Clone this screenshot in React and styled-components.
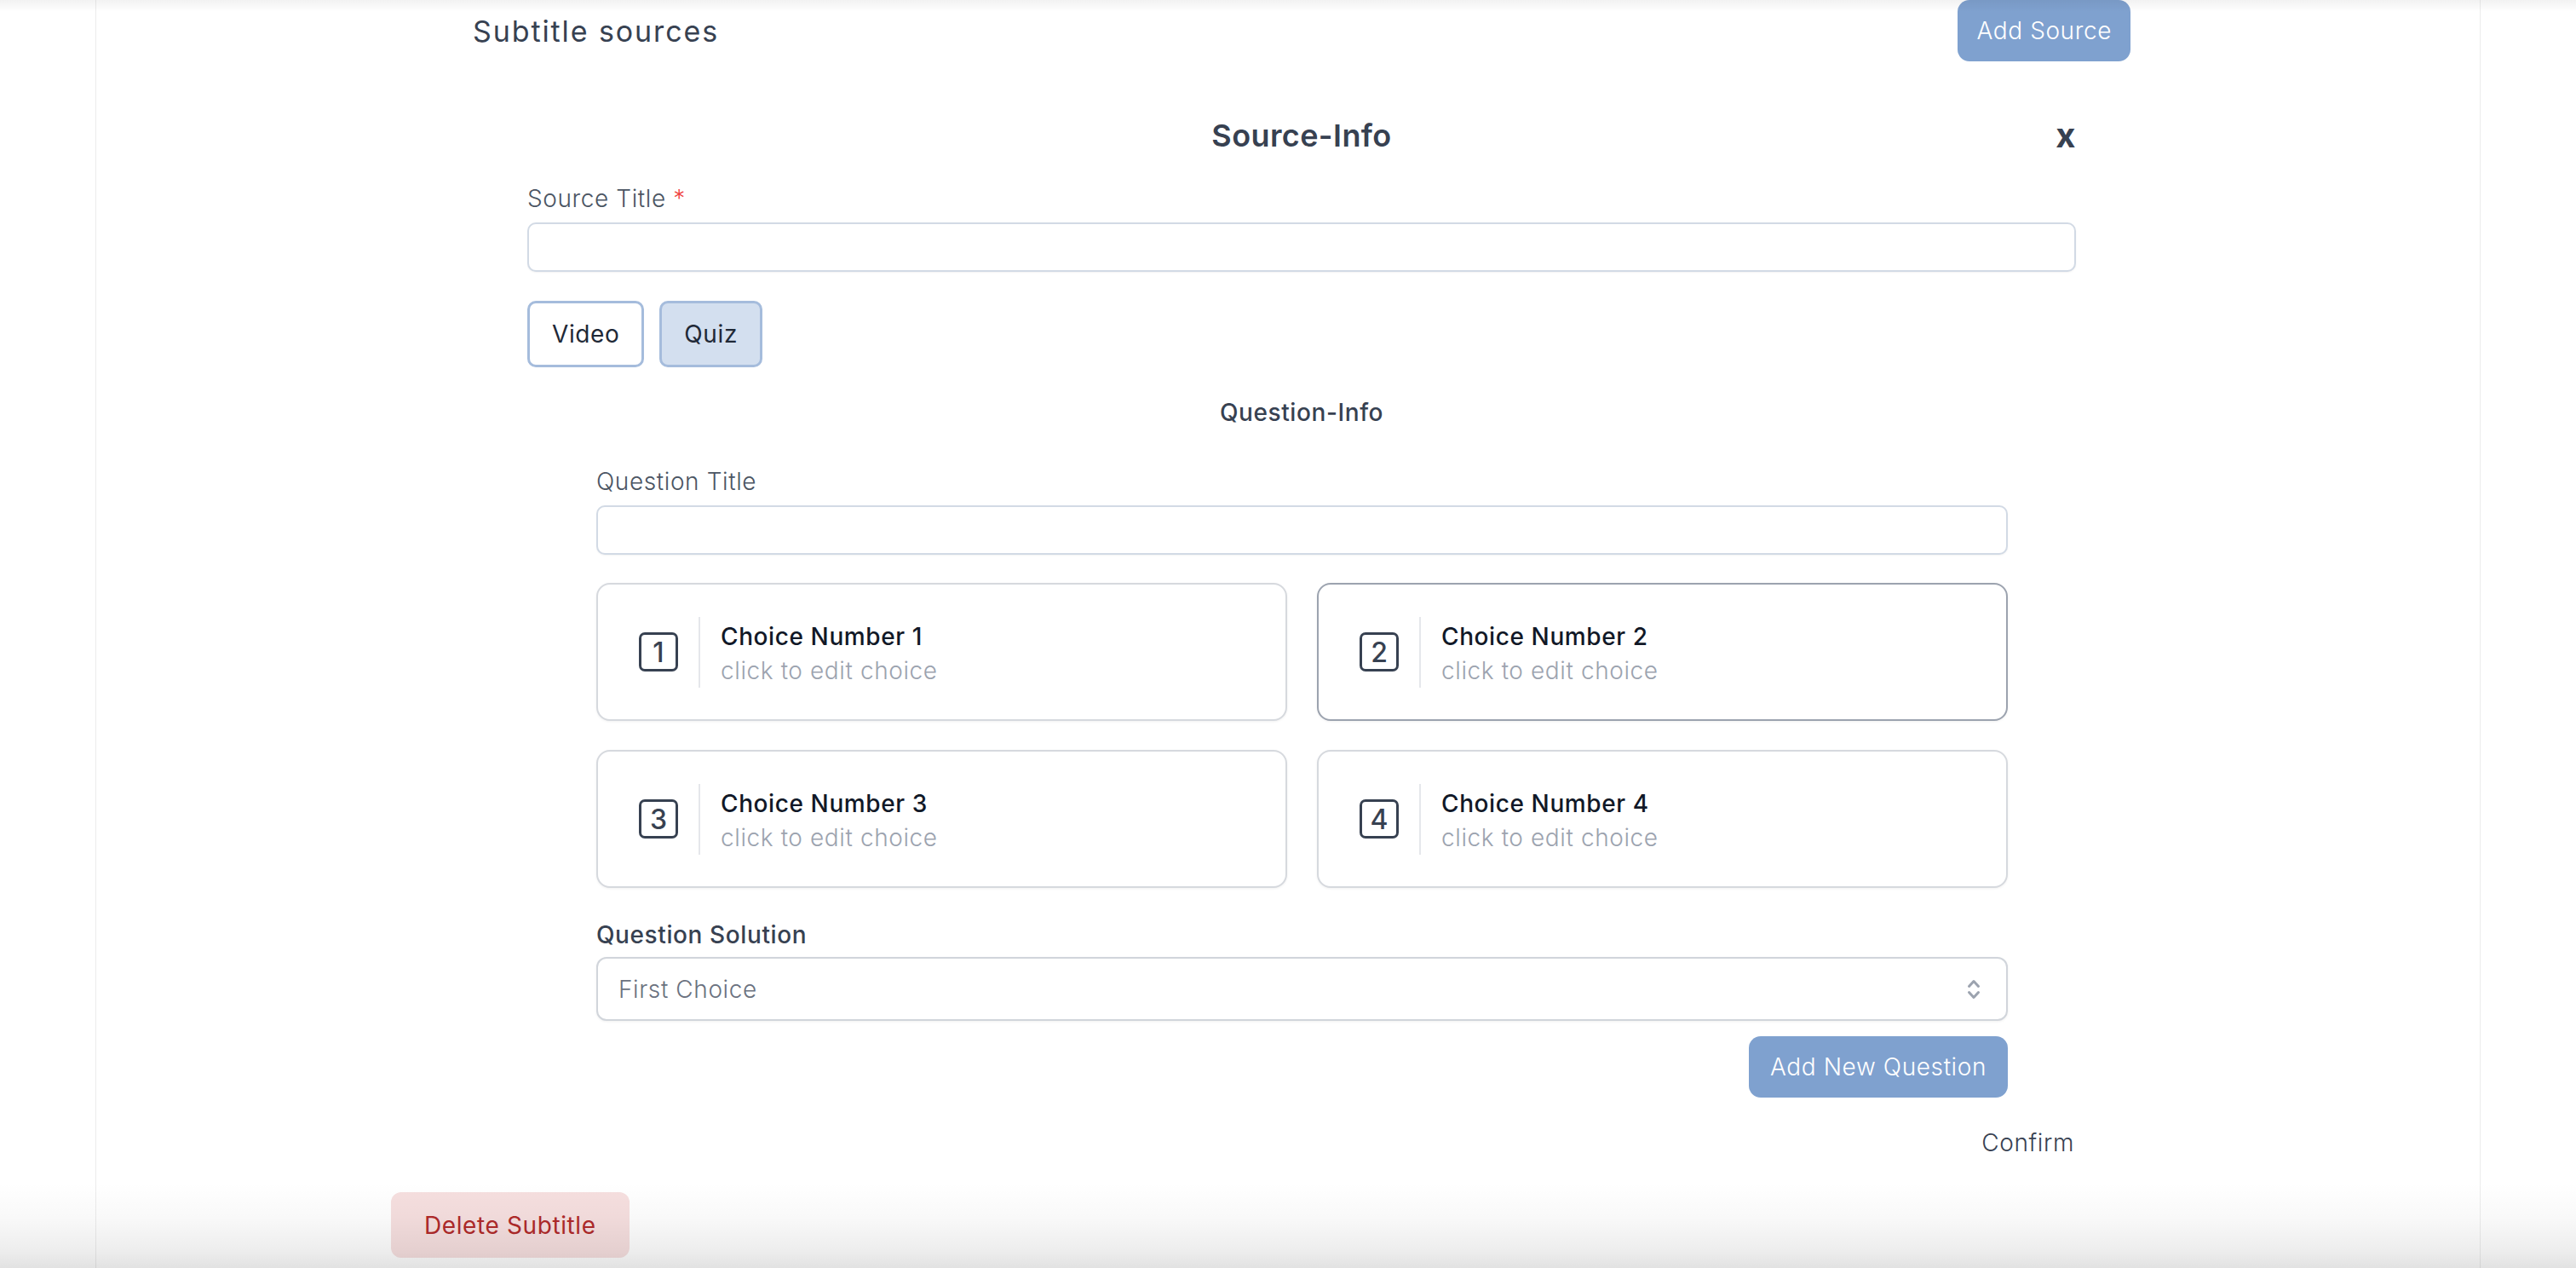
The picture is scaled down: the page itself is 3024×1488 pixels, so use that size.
import React from "react";
import styled, { createGlobalStyle } from "styled-components";

const CHOICES = [
  { n: 1, title: "Choice Number 1" },
  { n: 2, title: "Choice Number 2", active: true },
  { n: 3, title: "Choice Number 3" },
  { n: 4, title: "Choice Number 4" },
];

const GlobalStyle = createGlobalStyle`
  html, body {
    margin: 0;
    padding: 0;
    background: #fff;
  }
  body {
    font-family: Inter, "Open Sans", "Noto Sans", sans-serif;
    color: #374151;
    letter-spacing: 0.6px;
  }
  * { box-sizing: border-box; }
`;

const ChevronUpDown = () =>
  <svg width="16" height="26" viewBox="0 0 16 26" fill="none"
    stroke="#9ca3af" strokeWidth="3" strokeLinecap="round" strokeLinejoin="round">
    <path d="M2.5 9.5 L8 3.5 L13.5 9.5" />
    <path d="M2.5 16.5 L8 22.5 L13.5 16.5" />
  </svg>

const ChoiceCard = ({ n, title, active }) =>
  <Card active={active}>
    <NumberBox>{n}</NumberBox>
    <ChoiceText>
      <ChoiceTitle>{title}</ChoiceTitle>
      <ChoiceHint>click to edit choice</ChoiceHint>
    </ChoiceText>
  </Card>

export default function App() {
  return (
    <Page>
      <GlobalStyle />
      <Panel>
        <Column>
          <Header>
            <SectionTitle>Subtitle sources</SectionTitle>
            <PrimaryButton>Add Source</PrimaryButton>
          </Header>

          <SourceForm>
            <TitleRow>
              <span />
              <FormTitle>Source-Info</FormTitle>
              <CloseButton>x</CloseButton>
            </TitleRow>

            <Label>Source Title <Required>*</Required></Label>
            <TextInput />

            <TypeRow>
              <TypeButton>Video</TypeButton>
              <TypeButton active>Quiz</TypeButton>
            </TypeRow>

            <SubHeading>Question-Info</SubHeading>

            <QuestionSection>
              <Label style={{ marginTop: 41 }}>Question Title</Label>
              <TextInput />

              <ChoiceGrid>
                {CHOICES.map(c => <ChoiceCard key={c.n} {...c} />)}
              </ChoiceGrid>

              <StrongLabel>Question Solution</StrongLabel>
              <Select>
                <span>First Choice</span>
                <ChevronUpDown />
              </Select>

              <PrimaryButton as="div" style={{ alignSelf: "flex-end", marginTop: 18, padding: "0 25px" }}>
                Add New Question
              </PrimaryButton>
            </QuestionSection>

            <ConfirmLink>Confirm</ConfirmLink>
          </SourceForm>

          <DeleteButton>Delete Subtitle</DeleteButton>
        </Column>
      </Panel>
    </Page>
  );
}

const Page = styled.div`
  position: relative;
  height: 1488px;
  overflow: hidden;
  padding: 0 112px;
  background: #fff;

  &::before {
    content: "";
    position: absolute;
    left: 0;
    right: 0;
    top: 0;
    height: 14px;
    background: linear-gradient(to bottom, rgba(0,0,0,0.05), rgba(0,0,0,0));
    pointer-events: none;
  }

  &::after {
    content: "";
    position: absolute;
    left: 0;
    right: 0;
    bottom: 0;
    height: 100px;
    background: linear-gradient(to bottom,
      rgba(0,0,0,0) 0%,
      rgba(0,0,0,0.025) 40%,
      rgba(0,0,0,0.07) 80%,
      rgba(0,0,0,0.115) 100%);
    pointer-events: none;
  }
`;

const Panel = styled.main`
  height: 100%;
  background: #fff;
  border-left: 1px solid #ececec;
  border-right: 1px solid #ececec;
  padding-left: 346px;
`;

const Column = styled.div`
  width: 2138px;
  display: flex;
  flex-direction: column;
`;

const Header = styled.div`
  display: flex;
  justify-content: space-between;
  align-items: center;
  height: 72px;
  padding: 0 96px;
`;

const SectionTitle = styled.h2`
  margin: 0;
  font-size: 34px;
  font-weight: 400;
  letter-spacing: 1.9px;
  color: #374151;
`;

const PrimaryButton = styled.button`
  display: flex;
  align-items: center;
  justify-content: center;
  height: 72px;
  padding: 0 22px;
  border: none;
  border-radius: 14px;
  background: #7fa1cf;
  color: #fff;
  font-family: inherit;
  font-size: 28px;
  font-weight: 300;
  letter-spacing: 0.6px;
`;

const SourceForm = styled.section`
  display: flex;
  flex-direction: column;
  margin: 0 160px;
`;

const TitleRow = styled.div`
  display: grid;
  grid-template-columns: 1fr auto 1fr;
  align-items: center;
  margin-top: 60px;
  height: 54px;
`;

const FormTitle = styled.h3`
  margin: 0;
  font-size: 36px;
  line-height: 54px;
  font-weight: 600;
  letter-spacing: 0.4px;
  color: #374151;
`;

const CloseButton = styled.span`
  justify-self: end;
  font-size: 40px;
  line-height: 54px;
  font-weight: 700;
  color: #374151;
`;

const Label = styled.label`
  display: block;
  margin-top: 27px;
  font-size: 28px;
  line-height: 40px;
  font-weight: 300;
  color: #4b5563;
`;

const StrongLabel = styled(Label)`
  margin-top: 35px;
  font-weight: 500;
  color: #374151;
`;

const Required = styled.span`
  color: #ef4444;
`;

const TextInput = styled.div`
  margin-top: 8px;
  height: 58px;
  border: 2px solid #d2dae5;
  border-radius: 10px;
  background: #fff;
  box-shadow: 0 1px 2px rgba(0,0,0,0.05);
`;

const TypeRow = styled.div`
  display: flex;
  gap: 18px;
  margin-top: 34px;
`;

const TypeButton = styled.button`
  height: 78px;
  padding: 0 26px;
  border: 3px solid #a5bcdc;
  border-radius: 10px;
  background: ${props => props.active ? "#d3dfef" : "#fff"};
  color: #1f2937;
  font-family: inherit;
  font-size: 28px;
  font-weight: 400;
  letter-spacing: 0.6px;
`;

const SubHeading = styled.div`
  margin-top: 33px;
  text-align: center;
  font-size: 28px;
  line-height: 40px;
  font-weight: 500;
  color: #374151;
`;

const QuestionSection = styled.div`
  display: flex;
  flex-direction: column;
  margin: 0 80px 0 81px;
`;

const ChoiceGrid = styled.div`
  display: grid;
  grid-template-columns: 1fr 1fr;
  grid-auto-rows: 162px;
  gap: 34px 35px;
  margin-top: 33px;
`;

const Card = styled.div`
  display: flex;
  align-items: center;
  padding: 0 48px;
  border: 2px solid ${props => props.active ? "#9ca3af" : "#d6d9de"};
  border-radius: 16px;
  background: #fff;
  box-shadow: 0 1px 3px rgba(0,0,0,0.06);
`;

const NumberBox = styled.div`
  display: flex;
  align-items: center;
  justify-content: center;
  width: 46px;
  height: 46px;
  border: 3px solid #374151;
  border-radius: 7px;
  font-size: 32px;
  font-weight: 500;
  letter-spacing: 0;
  color: #374151;
`;

const ChoiceText = styled.div`
  margin-left: 24px;
  padding: 3px 0 0 24px;
  border-left: 2px solid #e5e7eb;
  font-size: 28px;
  line-height: 40px;
`;

const ChoiceTitle = styled.div`
  font-weight: 500;
  color: #111827;
`;

const ChoiceHint = styled.div`
  font-weight: 300;
  color: #9ca3af;
`;

const Select = styled.div`
  display: flex;
  align-items: center;
  justify-content: space-between;
  margin-top: 6px;
  height: 75px;
  padding: 0 30px 0 24px;
  border: 2px solid #d1d5db;
  border-radius: 12px;
  background: #fff;
  box-shadow: 0 1px 3px rgba(0,0,0,0.06);
  font-size: 28px;
  font-weight: 300;
  color: #6b7280;
`;

const ConfirmLink = styled.div`
  align-self: flex-end;
  margin-top: 33px;
  margin-right: 2px;
  font-size: 28px;
  line-height: 40px;
  font-weight: 300;
  color: #374151;
`;

const DeleteButton = styled.button`
  align-self: flex-start;
  margin-top: 38px;
  height: 77px;
  padding: 0 39px;
  border: none;
  border-radius: 12px;
  background: #f6dfdf;
  color: #b02a2a;
  font-family: inherit;
  font-size: 28px;
  font-weight: 400;
  letter-spacing: 0.6px;
`;
